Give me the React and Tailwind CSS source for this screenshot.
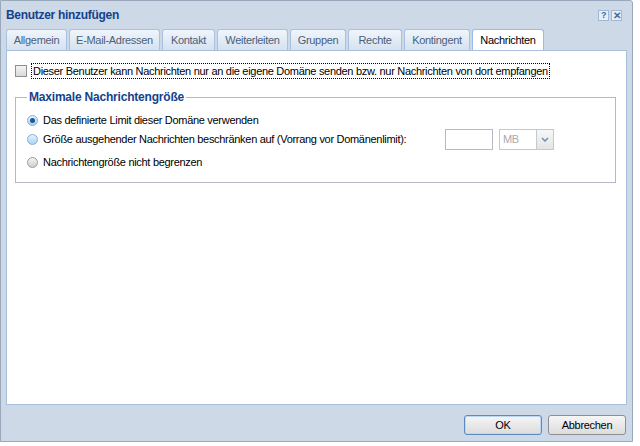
import React from "react";

const tabs = ["Allgemein","E-Mail-Adressen","Kontakt","Weiterleiten","Gruppen","Rechte","Kontingent","Nachrichten"];
const widths = [61,91,53,71,56,54,66,72];

function Radio({ checked, light }) {
  return (
    <span className={`relative inline-block shrink-0 w-[11px] h-[11px] rounded-full border ${light ? "border-[#7fb0d8] bg-gradient-to-b from-[#e6f4ff] to-[#a9d3f2]" : "border-[#9a9a9a] bg-gradient-to-b from-[#f4f4f4] to-[#cfcfcf]"}`}>
      {checked && <span className="absolute left-[2px] top-[2px] w-[5px] h-[5px] rounded-full bg-[#1d5a93]" />}
    </span>
  );
}

export default function App() {
  return (
    <div className="w-[640px] h-[446px] bg-white whitespace-nowrap" style={{ fontFamily: "'Liberation Sans', Arial, sans-serif" }}>
      <div className="w-[633px] h-[442px] bg-[#ced9e7] border border-[#99a8bb] rounded-tr-[3px] flex flex-col text-[11px] tracking-[-0.3px] text-black">
        <div className="h-[28px] flex items-center justify-between pl-[5px] pr-[10px]">
          <span className="font-bold text-[12px] tracking-[-0.3px] text-[#15428b]">Benutzer hinzufügen</span>
          <div className="flex gap-[2px]">
            <span className="w-[11px] h-[11px] border border-[#9fb8d6] bg-[#e6eef8] text-[#3e6aa6] text-[9px] font-bold leading-[9px] flex items-center justify-center">?</span>
            <span className="w-[11px] h-[11px] border border-[#9fb8d6] bg-[#e6eef8] text-[#3e6aa6] text-[10px] font-bold leading-[9px] flex items-center justify-center">✕</span>
          </div>
        </div>
        <div className="flex pl-[5px] gap-[2px] h-[21px] items-end">
          {tabs.map((t, i) => {
            const active = i === tabs.length - 1;
            return (
              <div key={t} style={{ width: widths[i] }}
                className={`h-[21px] flex items-center justify-center border border-b-0 rounded-t-[3px] ${active ? "bg-white border-[#99bbe8] text-black" : "bg-gradient-to-b from-[#f0f5fb] to-[#d5e2f1] border-[#a8c1e0] text-[#4a5f7a]"}`}>
                {t}
              </div>
            );
          })}
        </div>
        <div className="mx-[5px] w-[621px] h-[355px] bg-white border border-[#a8c0dc] pt-[12px] pl-[8px]">
          <div className="flex items-center gap-[4px] h-[16px]">
            <span className="w-[12px] h-[12px] border border-[#8e8f8f] bg-gradient-to-b from-[#f4f4f4] to-[#dadada]" />
            <span className="border border-dotted border-black px-[1px] leading-[14px]">Dieser Benutzer kann Nachrichten nur an die eigene Domäne senden bzw. nur Nachrichten von dort empfangen</span>
          </div>
          <fieldset className="mt-[9px] w-[601px] h-[95px] border border-[#b5b8c8] pl-[11px] pr-0 pb-0 pt-0">
            <legend className="px-[2px] font-bold text-[#15428b] text-[12px] tracking-[-0.2px]">Maximale Nachrichtengröße</legend>
            <div className="flex flex-col pt-[6px]">
              <div className="flex items-center gap-[5px] h-[16px]">
                <Radio checked light />
                <span>Das definierte Limit dieser Domäne verwenden</span>
              </div>
              <div className="flex items-center gap-[5px] h-[22px] mt-[0px]">
                <Radio light />
                <span className="w-[397px]">Größe ausgehender Nachrichten beschränken auf (Vorrang vor Domänenlimit):</span>
                <span className="w-[48px] h-[21px] border border-[#b5b8c8] bg-white" />
                <span className="ml-[1px] w-[55px] h-[21px] border border-[#c4c8d0] bg-white flex items-center">
                  <span className="flex-1 pl-[3px] text-[#aaaaaa]">MB</span>
                  <span className="w-[17px] h-full border-l border-[#c4c8d0] bg-gradient-to-b from-[#f7f7f7] to-[#e4e4e4] flex items-center justify-center">
                    <svg width="8" height="5" viewBox="0 0 8 5"><path d="M1 1 L4 4 L7 1" stroke="#6d8fb5" strokeWidth="1.5" fill="none" /></svg>
                  </span>
                </span>
              </div>
              <div className="flex items-center gap-[5px] h-[16px] mt-[4px]">
                <Radio />
                <span>Nachrichtengröße nicht begrenzen</span>
              </div>
            </div>
          </fieldset>
        </div>
        <div className="flex justify-end gap-[6px] pr-[6px] pt-[10px]">
          <button className="w-[78px] h-[20px] border border-[#5d8ac1] rounded-[3px] bg-gradient-to-b from-[#f6f6f6] to-[#dcdcdc] text-[11px] shadow-[inset_0_0_0_1px_#bdd6f2]">OK</button>
          <button className="w-[78px] h-[20px] border border-[#8f8f8f] rounded-[3px] bg-gradient-to-b from-[#f6f6f6] to-[#dcdcdc] text-[11px]">Abbrechen</button>
        </div>
      </div>
    </div>
  );
}
